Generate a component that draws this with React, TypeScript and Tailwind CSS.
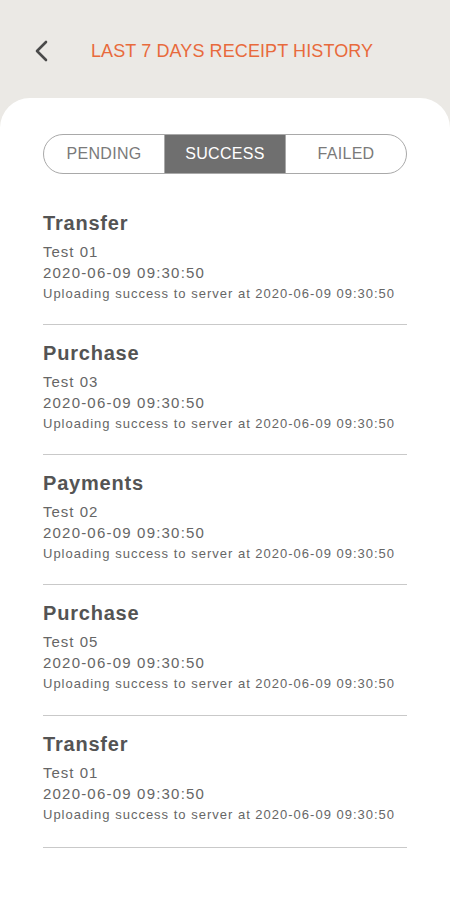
const RECEIPTS = [
  { type: "Transfer", name: "Test 01" },
  { type: "Purchase", name: "Test 03" },
  { type: "Payments", name: "Test 02" },
  { type: "Purchase", name: "Test 05" },
  { type: "Transfer", name: "Test 01" },
];

const TABS = ["PENDING", "SUCCESS", "FAILED"];

export default function App() {
  const active = "SUCCESS";

  return (
    <div
      className="min-h-[900px] w-[450px] bg-[#ebe9e5] flex flex-col"
      style={{ fontFamily: '"Liberation Sans", Arial, sans-serif' }}
    >
      {/* header */}
      <div className="h-[98px] flex items-center pl-[33px] pt-[4px]">
        <svg width="18" height="24" viewBox="0 0 18 24" fill="none" className="shrink-0">
          <path d="M13 3 L4 12 L13 21" stroke="#4a4a4a" strokeWidth="2.6" strokeLinecap="round" strokeLinejoin="round" />
        </svg>
        <h1 className="ml-[40px] text-[18px] leading-none text-[#e86a3c] tracking-[0.1px]">
          LAST 7 DAYS RECEIPT HISTORY
        </h1>
      </div>

      {/* card */}
      <div className="flex-1 bg-white rounded-t-[30px] px-[43px] pt-[36px]">
        <div className="flex h-[40px] rounded-full border border-[#a9a9a9] overflow-hidden">
          {TABS.map((t) => (
            <div
              key={t}
              className={`flex-1 flex items-center justify-center text-[16px] tracking-[0.3px] ${
                t === active ? "bg-[#6f6f6f] text-white" : "text-[#7a7a7a]"
              } ${t === "SUCCESS" ? "border-x border-[#a9a9a9]" : ""}`}
            >
              {t}
            </div>
          ))}
        </div>

        <div className="mt-[21px]">
          {RECEIPTS.map((r, i) => (
            <div key={i} className="pt-[16px] pb-[20px] border-b border-[#c9c9c9] last:pb-[22px] [&:nth-child(4)]:pb-[21px]">
              <div className="text-[20px] leading-[24px] font-bold text-[#545454] tracking-[0.8px] mb-[6px]">
                {r.type}
              </div>
              <div className="text-[15px] leading-[21px] text-[#666] tracking-[1px]">{r.name}</div>
              <div className="text-[15px] leading-[21px] text-[#666] tracking-[1.2px]">2020-06-09 09:30:50</div>
              <div className="text-[13px] leading-[21px] text-[#666] tracking-[1px]">
                Uploading success to server at 2020-06-09 09:30:50
              </div>
            </div>
          ))}
        </div>
      </div>
    </div>
  );
}
